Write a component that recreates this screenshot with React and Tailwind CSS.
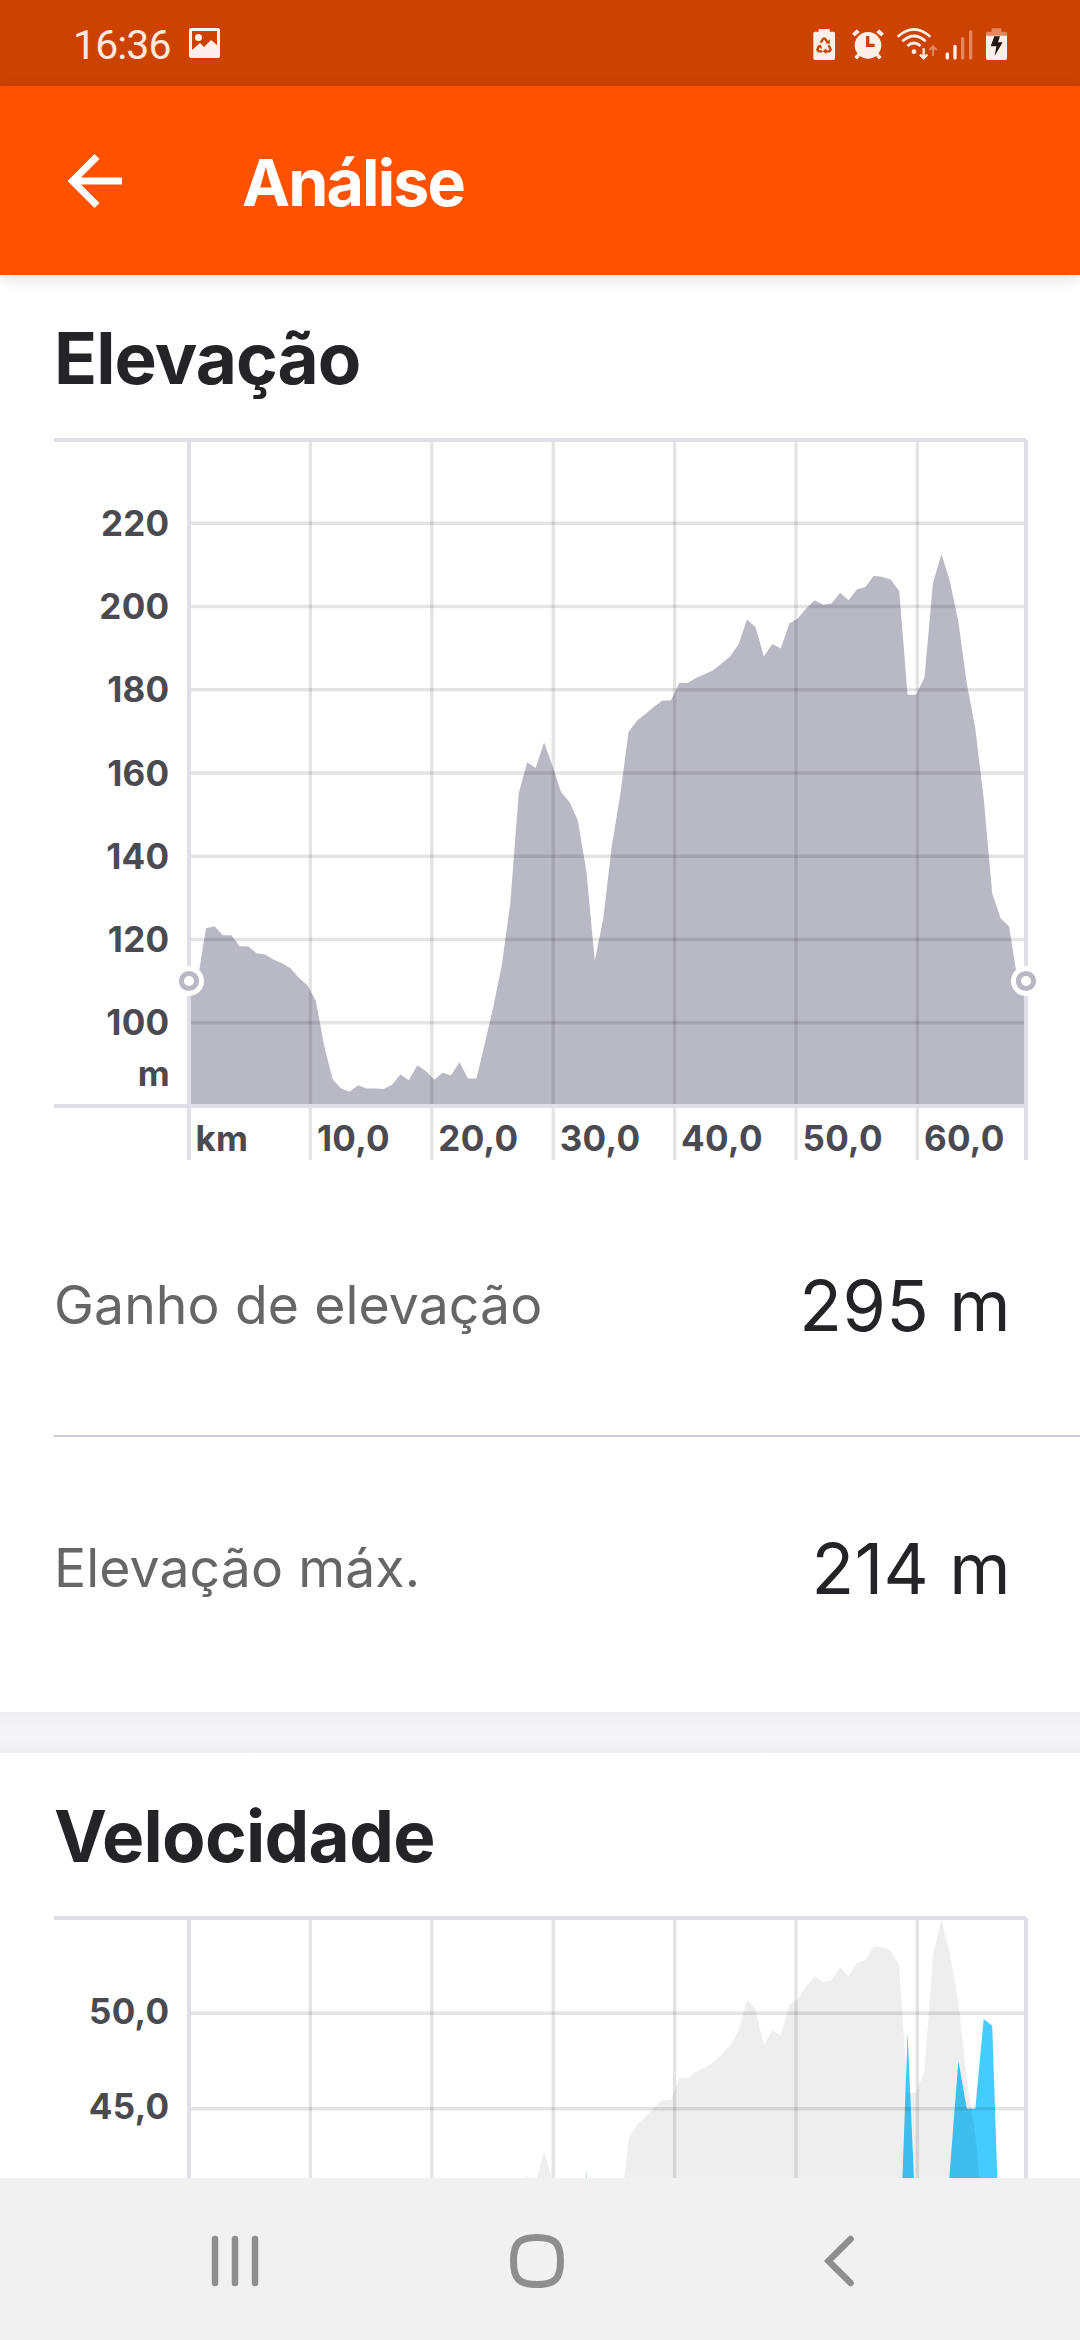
const ELEVATION = [
  110.1, 109.9, 122.7, 123.2, 121, 121, 118.4, 118.3, 116.7, 116.4,
  115.2, 114.3, 113.1, 110.8, 109, 105.3, 94.3, 86.4, 84.2, 83.4,
  85, 84.2, 84.2, 84.1, 85.1, 87.6, 86.2, 89.8, 88.4, 86.3,
  88, 87.4, 90.5, 86.6, 86.6, 95.1, 103.9, 113.9, 128.7, 155.1,
  162.6, 161.2, 167.3, 161.7, 155.4, 153, 148.6, 136.3, 114.9, 125.1,
  142.3, 154.7, 169.9, 172.6, 174.2, 175.9, 177.4, 177.4, 181.7, 181.6,
  182.9, 183.7, 184.7, 186.3, 188, 190.9, 196.9, 195, 188, 191,
  189.9, 195.9, 197.1, 199.5, 201.5, 200.4, 200.7, 203.3, 201.5, 204.1,
  204.7, 207.4, 207.1, 206.5, 203.7, 178.8, 178.8, 183, 205.7, 212.6,
  206, 196.3, 181.5, 170.7, 153.8, 131.1, 125.1, 123.1, 110.3, 110,
];

// Speed peaks, [sample index, km/h]
const SPEED = [
  [46, 30], [47, 41.8], [48, 30], [84, 36.6], [85, 48.95], [86, 38.8],
  [89, 34], [90, 41.8], [91, 47.5], [92, 45], [93, 45], [94, 49.7],
  [95, 49.35], [96, 36.3],
];

const LEFT = 189;
const RIGHT = 1026;
const STEP = (RIGHT - LEFT) / 99;
const KM_LABELS = ["km", "10,0", "20,0", "30,0", "40,0", "50,0", "60,0"];

const ELEVATION_TICKS = [220, 200, 180, 160, 140, 120, 100].map((v) => ({
  label: String(v),
  y: 668 - (v - 80) * 4.1625,
}));

const SPEED_TICKS = [
  { label: "50,0", y: 97.3 },
  { label: "45,0", y: 192.7 },
];

function areaPath(points, bottom) {
  const line = points.map(([i, y]) => `${(LEFT + i * STEP).toFixed(1)} ${y.toFixed(1)}`);
  const first = LEFT + points[0][0] * STEP;
  const last = LEFT + points[points.length - 1][0] * STEP;
  return `M${first} ${bottom}L${line.join("L")}L${last} ${bottom}Z`;
}

function Chart({ height, bottom, ticks, labelShift, children, markerY, unit }) {
  return (
    <svg
      width="1080"
      height={height}
      viewBox={`0 0 1080 ${height}`}
      className="block shrink-0 fill-[#4a4a50] font-[Inter,sans-serif] text-[35px] font-bold tracking-[0.3px]"
    >
      {children}
      <g stroke="#000" strokeOpacity="0.105" strokeWidth="3.4">
        {ticks.map((t) => (
          <line key={t.label} x1="191" x2="1024" y1={t.y} y2={t.y} />
        ))}
        {KM_LABELS.slice(1).map((label, i) => (
          <line key={label} x1={310.4 + i * 121.4} x2={310.4 + i * 121.4} y1="4" y2={bottom + 54} />
        ))}
      </g>
      <g stroke="#e0dfe7" strokeWidth="4">
        <line x1="54" x2="1026" y1="2" y2="2" />
        <line x1="54" x2="1026" y1={bottom} y2={bottom} />
        <line x1={LEFT} x2={LEFT} y1="2" y2={bottom + 54} />
        <line x1={RIGHT} x2={RIGHT} y1="2" y2={bottom + 54} />
      </g>
      {ticks.map((t) => (
        <text key={t.label} x="169.5" y={t.y + labelShift} textAnchor="end">
          {t.label}
        </text>
      ))}
      {unit && (
        <text x="170" y={bottom - 20.5} textAnchor="end">
          {unit}
        </text>
      )}
      {unit &&
        KM_LABELS.map((label, i) => (
          <text key={label} x={195.5 + i * 121.4} y={bottom + 45}>
            {label}
          </text>
        ))}
      {markerY &&
        [LEFT, RIGHT].map((x) => (
          <g key={x}>
            <circle cx={x} cy={markerY} r="15" fill="#fff" />
            <circle cx={x} cy={markerY} r="7.6" fill="#fff" stroke="#b9b8c5" strokeWidth="5" />
          </g>
        ))}
    </svg>
  );
}

function SectionTitle({ children, tracking }) {
  return (
    <div className="flex h-[163px] shrink-0 items-center pt-[3px] pl-[54px]">
      <h2 className={`text-[71px] leading-none font-bold text-[#242428] ${tracking}`}>{children}</h2>
    </div>
  );
}

function StatusBar() {
  return (
    <div className="flex h-[86px] shrink-0 items-center bg-[#cc4200] pr-[72px] pl-[73px] text-[#fdf0ea]">
      <span className="pt-[4px] font-[Roboto,sans-serif] text-[41px] leading-none tracking-[-0.9px] text-[#ffe9df]">16:36</span>
      <svg width="31" height="30" viewBox="0 0 31 30" className="ml-[18px] block" fill="currentColor">
        <path
          fillRule="evenodd"
          d="M2 0h27a2 2 0 0 1 2 2v26a2 2 0 0 1-2 2H2a2 2 0 0 1-2-2V2a2 2 0 0 1 2-2zM3 3v19l8-7 4 4 7-7 6 5V3z"
        />
        <circle cx="9.5" cy="9.5" r="3.5" />
      </svg>
      <div className="ml-auto flex items-center pt-[2px]">
        <svg width="22" height="34" viewBox="159 81 66 102" fill="currentColor">
          <path d="M176 87h33v8h11a5 5 0 0 1 5 5v75a5 5 0 0 1-5 5h-55a5 5 0 0 1-5-5v-75a5 5 0 0 1 5-5h11z" />
          <g fill="none" stroke="#cc4200" strokeWidth="7">
            <path d="M182 128l8-12h5l7 10" />
            <path d="M206 136l6 13-4 5h-12" />
            <path d="M187 154h-11l-4-5 6-12" />
          </g>
          <g fill="#cc4200">
            <path d="M196 130l13 2 1-14z" />
            <path d="M199 145v17l-11-8z" />
            <path d="M170 138l13-4 3 13z" />
          </g>
        </svg>
        <svg width="34" height="34" viewBox="273 81 102 102" fill="currentColor" className="ml-4">
          <circle cx="324" cy="136" r="40" />
          <path d="M280 105l15-13M368 105l-15-13" stroke="currentColor" strokeWidth="12" />
          <path d="M297 163l-10 12M351 163l10 12" stroke="currentColor" strokeWidth="11" />
          <path d="M323 108v28h21" fill="none" stroke="#cc4200" strokeWidth="10" />
        </svg>
        <svg width="42" height="34" viewBox="408 81 126 102" fill="none" stroke="currentColor" className="ml-[11px]">
          <g strokeWidth="8">
            <path d="M413 110q49-44 98 0" />
            <path d="M427 124q35-32 70 0" />
            <path d="M442 138q20-18 40 0" />
          </g>
          <circle cx="462" cy="155" r="7" fill="currentColor" stroke="none" />
          <path d="M491 145v29M480 164l11 11 11-11" strokeWidth="7" />
          <path d="M519 168v-29M508 150l11-11 11 11" strokeWidth="6" stroke="#e08b63" />
        </svg>
        <svg width="28" height="34" viewBox="555 81 84 102" strokeWidth="10" strokeLinecap="round" className="ml-[7px]">
          <path d="M562 162v12M585 139v35" stroke="currentColor" />
          <path d="M608 116v58M632 96v78" stroke="#e5865c" />
        </svg>
        <svg width="23" height="34" viewBox="675 81 69 102" className="ml-3">
          <path d="M695 85h29v10h12a5 5 0 0 1 5 5v8h-63v-8a5 5 0 0 1 5-5h12z" fill="#e5865c" />
          <path d="M678 107h63v68a5 5 0 0 1-5 5h-53a5 5 0 0 1-5-5z" fill="currentColor" />
          <path d="M703 109h17l-6 18h14l-24 41 5-29h-17z" fill="#231815" />
        </svg>
      </div>
    </div>
  );
}

function AppBar() {
  return (
    <header className="z-10 flex h-[189px] shrink-0 items-center bg-[#ff5200] pl-[68px] text-white shadow-[0_4px_14px_rgba(0,0,0,0.12)]">
      <svg width="54" height="54" viewBox="0 0 54 54" fill="none" stroke="currentColor" strokeWidth="7">
        <path d="M54 27H6M29 2.5L4.5 27L29 51.5" />
      </svg>
      <h1 className="pt-[5px] pl-[120px] text-[64.5px] leading-none font-bold tracking-[-1.9px]">Análise</h1>
    </header>
  );
}

function Stat({ label, value, className }) {
  return (
    <div className={`flex shrink-0 items-center justify-between pr-[69px] ${className}`}>
      <span className="text-[53.5px] tracking-[0.1px] text-[#666]">{label}</span>
      <span className="text-[70px] tracking-[0.4px] text-[#242428]">{value}</span>
    </div>
  );
}

function NavBar() {
  return (
    <nav className="flex h-[162px] shrink-0 items-center gap-[242px] bg-[#f1f1f1] pt-[4px] pl-[205px] text-[#8e8e8e]">
      <svg width="60" height="60" fill="none" stroke="currentColor" strokeWidth="6.5" strokeLinecap="round">
        <path d="M10 8v44M30 8v44M50 8v44" />
      </svg>
      <svg width="60" height="60" fill="none" stroke="currentColor" strokeWidth="7">
        <path d="M30 6.5C48 6.5 53.5 12 53.5 30S48 53.5 30 53.5S6.5 48 6.5 30S12 6.5 30 6.5Z" />
      </svg>
      <svg width="60" height="60" fill="none" stroke="currentColor" strokeWidth="6.5" strokeLinecap="round">
        <path d="M41.6 8L19.5 30L41.6 52" />
      </svg>
    </nav>
  );
}

export default function App() {
  const elevation = ELEVATION.map((v, i) => [i, 668 - (v - 80) * 4.1625]);
  const ghost = ELEVATION.map((v, i) => [i, 3.3 + (212.6 - v) * 5.13]);
  const speed = SPEED.map(([i, v]) => [i, 97.3 + (50 - v) * 19.08]);

  return (
    <div className="flex h-[2340px] w-[1080px] flex-col overflow-hidden bg-white font-[Inter,sans-serif]">
      <StatusBar />
      <AppBar />

      {/* Scrolled content, cut off by the navigation bar */}
      <main className="flex h-[1903px] shrink-0 flex-col overflow-hidden">
        <SectionTitle tracking="tracking-[-0.9px]">Elevação</SectionTitle>
        <Chart height={722} bottom={668} ticks={ELEVATION_TICKS} labelShift={12.5} markerY={543} unit="m">
          <path d={areaPath(elevation, 668)} fill="#b9b8c5" />
        </Chart>

        <div className="flex shrink-0 flex-col pl-[54px]">
          <Stat label="Ganho de elevação" value="295 m" className="h-[277px] border-b-2 border-[#cbcbd3] pt-4" />
          <Stat label="Elevação máx." value="214 m" className="h-[275px] pb-3" />
        </div>

        <div className="h-[41px] shrink-0 bg-linear-to-b from-[#eeeef3] via-[#f5f5f9] to-[#f0eff5]" />

        <SectionTitle tracking="tracking-[-0.7px]">Velocidade</SectionTitle>
        <Chart height={262} bottom={668} ticks={SPEED_TICKS} labelShift={10.5}>
          <path d={areaPath(speed, 668)} fill="#44ccff" />
          <path d={areaPath(ghost, 668)} fill="#000" fillOpacity="0.067" />
        </Chart>
      </main>

      <NavBar />
    </div>
  );
}
